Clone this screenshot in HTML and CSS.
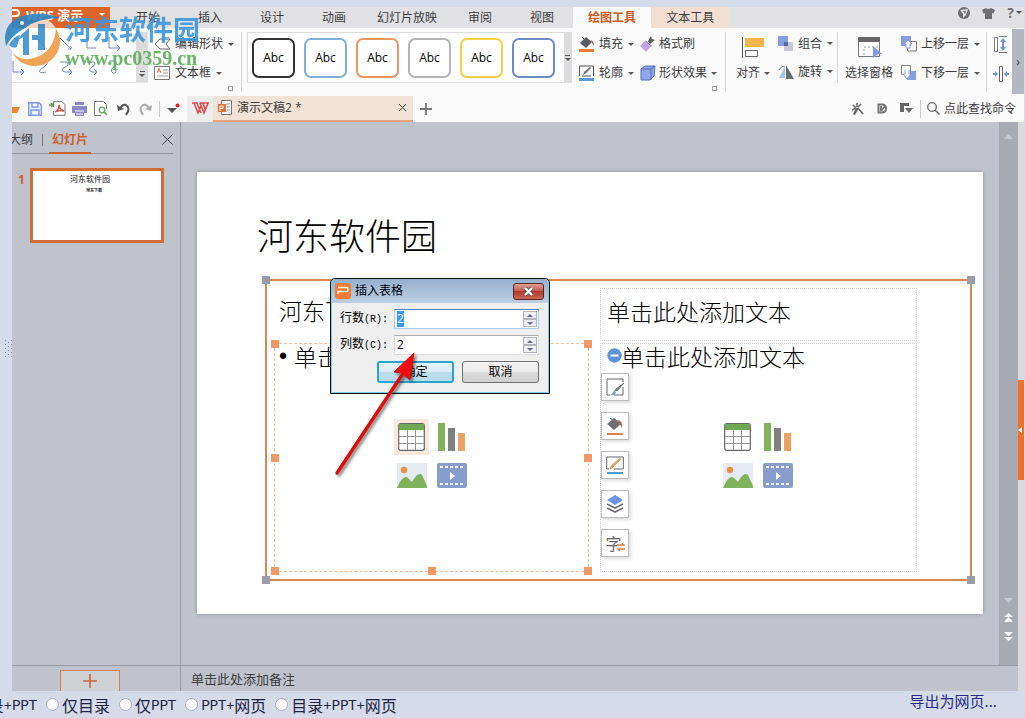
FILE: index.html
```html
<!DOCTYPE html>
<html lang="zh-CN">
<head>
<meta charset="utf-8">
<title>WPS 演示</title>
<link rel="stylesheet" href="styles.css">
</head>
<body>
<div class="workspace">
  <div class="gutter"><svg width="8" height="18" viewBox="0 0 8 18"><g fill="#7d93b8"><path d="M1 0h1v1h-1zM4 2h1v1h-1zM1 4h1v1h-1zM4 6h1v1h-1zM1 8h1v1h-1zM4 10h1v1h-1zM1 12h1v1h-1zM4 14h1v1h-1zM1 16h1v1h-1zM7 0h1v1h-1zM7 4h1v1h-1zM7 8h1v1h-1zM7 12h1v1h-1zM7 16h1v1h-1z"/></g></svg></div>
  <div class="app">
    <nav class="tabs">
      <button class="brand"><svg width="8" height="14" viewBox="0 0 8 14"><path d="M0 2h4q3 0 3 3t-3 3H0" fill="none" stroke="#fff" stroke-width="2"/></svg><b>WPS 演示</b><i class="caret light"></i></button>
      <button class="tab">开始</button>
      <button class="tab">插入</button>
      <button class="tab">设计</button>
      <button class="tab">动画</button>
      <button class="tab wide">幻灯片放映</button>
      <button class="tab">审阅</button>
      <button class="tab">视图</button>
      <button class="tab active">绘图工具</button>
      <button class="tab context">文本工具</button>
      <div class="tab-tools">
        <svg width="12" height="12" viewBox="0 0 12 12"><circle cx="6" cy="6" r="6" fill="#6f6f72"/><path d="M2 3l8-1-2 6-3 3 0-4z" fill="#e1e1e3"/><path d="M5 4l3 0-1 3z" fill="#6f6f72"/></svg>
        <svg width="13" height="12" viewBox="0 0 13 12"><path d="M4 1q2.500 2 5 0l4 2-1.500 3.500L10 6v6H3V6L1.500 6.500 0 3z" fill="#6f6f72"/></svg>
        <span class="help">?<i class="caret"></i></span>
      </div>
    </nav>

    <div class="ribbon">
      <div class="shape-gallery">
        <svg class="shapes" width="124" height="50" viewBox="0 0 124 50"><g fill="none" stroke="#6b86bf"><path d="M3 6l10 11M25 6l10 11M48 6l11 11M56 17h3v-3M75 5v11h9M97 5v11h11M105 13l3 3-3 3M1 29v11h11M9 37l3 3-3 3M28 30h6q3 1-1 4l-5 4q-2 4 6 2M48 30h7q3 3-2 5-5 3 0 5h7M57 37l3 3-3 3M75 30h7q3 2-2 5-5 3 0 5h5M82 37l3 3-3 3M97 29h6q3 3-1 6-5 3-1 6 3 1 3-3"/></g></svg>
        <button class="gallery-scroll" aria-label="更多形状"><i></i><i class="caret"></i></button>
      </div>
      <div class="stack edit">
        <button class="cmd"><svg width="17" height="14" viewBox="0 0 17 14"><path d="M1 7l5-5h10l-4 5 4 5H6z" fill="none" stroke="#666" /><path d="M11 0h4v3h-4z" fill="#8eaadb"/></svg>编辑形状<i class="caret"></i></button>
        <button class="cmd"><svg width="17" height="14" viewBox="0 0 17 14"><path d="M.5.5h15v13H.5z" fill="#fff" stroke="#777"/><path d="M3 7l2-5 2 5M4 5h2" fill="none" stroke="#d97b4f"/><path d="M9 4h5M9 7h5M3 10h11" stroke="#999"/></svg>文本框<i class="caret"></i></button>
        <i class="launcher"></i>
      </div>
      <div class="style-gallery">
        <button class="style s1">Abc</button><button class="style s2">Abc</button><button class="style s3">Abc</button><button class="style s4">Abc</button><button class="style s5">Abc</button><button class="style s6">Abc</button>
        <button class="gallery-scroll center" aria-label="更多样式"><i></i><i class="caret"></i></button>
      </div>
      <div class="stack">
        <button class="cmd"><svg width="16" height="16" viewBox="0 0 16 16"><path d="M1 7l6-6 6 5-6 6z" fill="#555b60"/><path d="M3 1l4 4" stroke="#555"/><path d="M12 4q3 1 3 6l-2-3z" fill="#b45b5b"/><path d="M0 13h15v3H0z" fill="#e97e32"/></svg>填充<i class="caret"></i></button>
        <button class="cmd"><svg width="16" height="16" viewBox="0 0 16 16"><path d="M.5 11V1h14v10M3 11h9" fill="none" stroke="#555"/><path d="M4 10l1-3 6-5 1 1-5 5z" fill="#666"/><path d="M0 13h15v3H0z" fill="#5b9bd5"/></svg>轮廓<i class="caret"></i></button>
      </div>
      <div class="stack effects">
        <button class="cmd"><svg width="16" height="16" viewBox="0 0 16 16"><path d="M8 5l3-5 1 3 3 1-5 4z" fill="#5d5d60"/><path d="M5 4l7 6-3 2z" fill="#6b6577"/><path d="M5 5l6 5-5 6-6-6z" fill="#c4a2e8"/></svg>格式刷</button>
        <button class="cmd"><svg width="16" height="16" viewBox="0 0 16 16"><path d="M1 4l4-3h10l-1 10-4 4H1z" fill="#8fa6ee" stroke="#5470b5"/><path d="M1 4h10v11M11 4l4-3" fill="none" stroke="#5470b5"/></svg>形状效果<i class="caret"></i></button>
        <i class="launcher"></i>
      </div>
      <button class="big align"><svg width="24" height="23" viewBox="0 0 24 23"><path d="M1.500 1v21" stroke="#555"/><path d="M4 2h19v9H4z" fill="#f5b54d"/><path d="M4.500 14.500h12v6h-12z" fill="#fff" stroke="#666"/></svg><span>对齐<i class="caret"></i></span></button>
      <div class="stack arrange">
        <button class="cmd"><svg width="16" height="16" viewBox="0 0 16 16"><path d="M6 6h9v9H6z" fill="#c9c9cf"/><path d="M0 0h10v10H0z" fill="#869ee4"/><path d="M6 6h4v4H6z" fill="#5967a6"/></svg>组合<i class="caret"></i></button>
        <button class="cmd"><svg width="16" height="16" viewBox="0 0 16 16"><path d="M7 2v12H1z" fill="#a9c5ec"/><path d="M8 1v14h8z" fill="#666b70"/><path d="M1 6q3-5 6-3" fill="none" stroke="#6790dd"/></svg>旋转<i class="caret"></i></button>
      </div>
      <button class="big pane"><svg width="25" height="23" viewBox="0 0 25 23"><path d="M1.500 2v18.500h21V2" fill="#fff" stroke="#777"/><path d="M1 1h22v5H1z" fill="#666"/><path d="M7 19V11h15" fill="none" stroke="#999" stroke-dasharray="2 2"/><path d="M16 10l9 8h-4l-5 4z" fill="#7d98e6"/></svg><span>选择窗格</span></button>
      <div class="stack">
        <button class="cmd"><svg width="16" height="16" viewBox="0 0 16 16"><path d="M0 0h10v10H0z" fill="#869ee4"/><path d="M10 5.500h5.500v9.500h-9v-4" fill="none" stroke="#777"/><path d="M3 8l4-4 4 4H9v4H5V8z" fill="#fff" stroke="#869ee4"/></svg>上移一层<i class="caret"></i></button>
        <button class="cmd"><svg width="16" height="16" viewBox="0 0 16 16"><path d="M6 6h9v9H6z" fill="#869ee4"/><path d="M.5.500h9v9h-9z" fill="#fff" stroke="#888"/><path d="M4 5v4H2l4 5 4-5H8V5" fill="#fff" stroke="#869ee4"/></svg>下移一层<i class="caret"></i></button>
      </div>
      <div class="stack sizes">
        <svg width="14" height="17" viewBox="0 0 14 17"><path d="M1.500 1.500h3v14h-3z" fill="#fff" stroke="#777"/><path d="M6 .500h8M6 16.500h8" stroke="#777"/><path d="M10 2l3 4h-2v5h2l-3 4-3-4h2V6H7z" fill="#6e94de"/></svg>
        <svg width="16" height="16" viewBox="0 0 16 16"><path d="M6.500.500h3v15h-3z" fill="#fff" stroke="#666"/><path d="M0 7h2V5l3 3-3 3V9H0zM16 7h-2V5l-3 3 3 3V9h2z" fill="#6e94de"/></svg>
      </div>
      <button class="more" aria-label="更多">›</button>
    </div>

    <div class="quick">
      <button class="slot first" aria-label="打开"><svg width="10" height="12" viewBox="0 0 10 12"><path d="M0 4h8l-3 6H0z" fill="#f0882c"/></svg></button>
      <button class="slot" aria-label="保存"><svg width="14" height="14" viewBox="0 0 14 14"><path d="M.7.7H11l2.300 2.300v10.300H.7zM4 1v4h6V1M3 13V8h8v5" fill="#eef2ff" stroke="#7c9ae3" stroke-width="1.400"/></svg></button>
      <button class="slot" aria-label="输出PDF"><svg width="17" height="15" viewBox="0 0 17 15"><path d="M4.500 6V.700H13l3 3v10.600H4.500V10" fill="#fff" stroke="#777"/><path d="M6 11q4-2 4-7 1 5 5 6-4-1-9 1" fill="none" stroke="#d2453e" stroke-width="1.300"/><path d="M0 4h4M2 2l2 2-2 2" fill="none" stroke="#5b9d4d" stroke-width="1.500"/></svg></button>
      <button class="slot" aria-label="打印"><svg width="15" height="14" viewBox="0 0 15 14"><path d="M3 0h9v3H3zM0 4h15v7H0zM3 10h9v4H3z" fill="#8d88c8"/><path d="M3 9h9M4 12h7" stroke="#fff"/></svg></button>
      <button class="slot" aria-label="打印预览"><svg width="14" height="15" viewBox="0 0 14 15"><path d="M12.500 8V3.500l-3-3h-9v14H7" fill="#fff" stroke="#777"/><circle cx="8" cy="9" r="2.800" fill="none" stroke="#69a457" stroke-width="1.300"/><path d="M10 11l3 3" stroke="#69a457" stroke-width="1.500"/></svg></button>
      <button class="slot" aria-label="撤消"><svg width="13" height="14" viewBox="0 0 13 14"><path d="M0 3l1 6 6-2z" fill="#555"/><path d="M3 7q2-5 6-4 5 3 0 10" fill="none" stroke="#555" stroke-width="2"/></svg></button>
      <button class="slot" aria-label="恢复"><svg width="13" height="14" viewBox="0 0 13 14"><path d="M13 3l-1 6-6-2z" fill="#aaa"/><path d="M10 7Q8 2 4 3q-5 3 0 10" fill="none" stroke="#aaa" stroke-width="2"/></svg></button>
      <span class="divider"></span>
      <button class="slot customize" aria-label="自定义"><svg width="13" height="12" viewBox="0 0 13 12"><path d="M0 5h10l-5 5z" fill="#555"/><circle cx="10.500" cy="2.500" r="2" fill="#e21d25"/></svg></button>
      <button class="home" aria-label="首页"><svg width="17" height="13" viewBox="0 0 17 13"><path d="M0 1h5l4 10M2 1l4 10 3-7M8 1h8l-4 10-4-10M11 1l2 6" fill="none" stroke="#e2474b" stroke-width="1.500"/></svg></button>
      <div class="doc-tab"><svg width="14" height="15" viewBox="0 0 14 15"><path d="M3.500 5V.500h10v14h-10V12" fill="#fff" stroke="#777"/><path d="M8 4h4M9 7h3M9 10h3" stroke="#999"/><path d="M0 4h8v8H0z" fill="#df7336"/><path d="M2 11V6h3v2.500H2" fill="none" stroke="#fff"/></svg><span>演示文稿2 *</span><button aria-label="关闭"><svg width="9" height="9" viewBox="0 0 9 9"><path d="M1 1l7 7M8 1L1 8" stroke="#444"/></svg></button></div>
      <button class="new" aria-label="新建"><svg width="12" height="12" viewBox="0 0 12 12"><path d="M6 0v12M0 6h12" stroke="#777" stroke-width="1.800"/></svg></button>
      <div class="quick-right">
        <svg width="12" height="12" viewBox="0 0 12 12"><path d="M5 0v4M1 2l3 3M9 1L6 4M0 7l4-2M6 5l5 6" fill="none" stroke="#666" stroke-width="1.500"/><path d="M4 5l3 0-4 7-2-1z" fill="#666"/></svg>
        <svg width="10" height="11" viewBox="0 0 10 11"><path d="M1.500 1.500H5q4 0 4 4t-4 4H1.500zM4 3v5M4 8l4-5" fill="none" stroke="#777" stroke-width="2"/></svg>
        <svg width="13" height="11" viewBox="0 0 13 11"><path d="M0 0h9v3H4v6H0zM5 5h8l-4 5z" fill="#666"/></svg>
        <span class="divider"></span>
        <button class="search"><svg width="13" height="13" viewBox="0 0 13 13"><circle cx="5" cy="5" r="4.300" fill="none" stroke="#666" stroke-width="1.300"/><path d="M8 8l4.500 4.500" stroke="#666" stroke-width="1.500"/></svg>点此查找命令</button>
      </div>
    </div>

    <div class="main">
      <aside class="sidebar">
        <div class="side-tabs"><button class="outline">大纲</button><span class="divider"></span><button class="selected">幻灯片</button><button class="close" aria-label="关闭"><svg width="11" height="11" viewBox="0 0 11 11"><path d="M.5.500l10 10M10.500.500l-10 10" stroke="#444"/></svg></button></div>
        <div class="thumbs"><b>1</b><div class="thumb"><span>河东软件园</span><small>河东下载</small></div></div>
        <div class="side-foot"><button aria-label="新建幻灯片"><svg width="14" height="14" viewBox="0 0 14 14"><path d="M7 0v14M0 7h14" stroke="#c8673a" stroke-width="1.600"/></svg></button></div>
      </aside>
      <section class="editor">
        <div class="canvas-row">
          <div class="canvas">
            <div class="slide">
              <h1>河东软件园</h1>
              <div class="group"><i class="grip tl"></i><i class="grip tr"></i><i class="grip bl"></i><i class="grip br"></i></div>
              <p class="left-title">河东下</p>
              <div class="body-box left"><p><span class="bullet">•</span>单击</p><div class="icons"><svg class="hot" width="35" height="36" viewBox="-4 -4 35 36"><use href="#ico-table"/></svg><svg width="28" height="28" viewBox="0 0 28 28"><use href="#ico-chart"/></svg><svg width="30" height="25" viewBox="0 0 30 25"><use href="#ico-image"/></svg><svg width="30" height="25" viewBox="0 0 30 25"><use href="#ico-film"/></svg></div>
                <i class="grip tl"></i><i class="grip tr"></i><i class="grip ml"></i><i class="grip mr"></i><i class="grip bl"></i><i class="grip bc"></i><i class="grip br"></i></div>
              <div class="title-box"><p>单击此处添加文本</p></div>
              <div class="body-box right"><p>单击此处添加文本</p><div class="icons"><svg width="35" height="36" viewBox="-4 -4 35 36"><use href="#ico-table"/></svg><svg width="28" height="28" viewBox="0 0 28 28"><use href="#ico-chart"/></svg><svg width="30" height="25" viewBox="0 0 30 25"><use href="#ico-image"/></svg><svg width="30" height="25" viewBox="0 0 30 25"><use href="#ico-film"/></svg></div></div>
              <div class="float-tools">
                <button class="minus" aria-label="收起"><svg width="15" height="15" viewBox="0 0 15 15"><circle cx="7.500" cy="7.500" r="7.200" fill="#5f93da"/><path d="M3.500 7.500h8" stroke="#fff" stroke-width="2"/></svg></button>
                <button aria-label="样式"><svg width="18" height="18" viewBox="0 0 18 18"><path d="M17 9v8H8M4 17H1V1h16v3" fill="none" stroke="#666"/><path d="M18 5l-7 8-2-1z" fill="#6d7468" stroke="#6d7468"/><path d="M8 12l2 2q-1 4-6 3 3-1 4-5z" fill="#7c95d2"/></svg></button>
                <button aria-label="填充"><svg width="18" height="18" viewBox="0 0 18 18"><path d="M1 7l7-6 7 6-7 6z" fill="#707072"/><path d="M4 1l4 3" stroke="#666"/><path d="M11 3q6 0 5 8l-2-4z" fill="#bb5a60"/><path d="M1 16h16v2H1z" fill="#db854c"/></svg></button>
                <button aria-label="轮廓"><svg width="18" height="18" viewBox="0 0 18 18"><path d="M3 13H.700V1h16.600v12H8" fill="none" stroke="#666"/><path d="M15 3l-9 9-2 1 1-3 8-7z" fill="#e3a067" stroke="#e3a067"/><path d="M1 16h16v2H1z" fill="#4f99d5"/></svg></button>
                <button aria-label="层次"><svg width="18" height="18" viewBox="0 0 18 18"><path d="M9 0l8 5-8 5-8-5z" fill="#6c95e2"/><path d="M1 9l8 4 8-4M1 13l8 4 8-4" fill="none" stroke="#707070" stroke-width="1.600"/></svg></button>
                <button class="glyph" aria-label="转换">字<svg width="8" height="8" viewBox="0 0 8 8"><path d="M0 2h7L5 0M8 6H1l2 2" fill="none" stroke="#df7b42" stroke-width="1.300"/></svg></button>
              </div>
            </div>
          </div>
          <div class="scrollbar"><svg width="9" height="5" viewBox="0 0 9 5"><path d="M0 5l4.500-5L9 5z" fill="#c7c8cc"/></svg><span></span><svg width="9" height="5" viewBox="0 0 9 5"><path d="M0 0h9L4.500 5z" fill="#c7c8cc"/></svg><svg width="9" height="9" viewBox="0 0 9 9"><path d="M0 4l4.500-4L9 4zM0 9l4.500-5L9 9z" fill="#fff"/></svg><svg width="9" height="9" viewBox="0 0 9 9"><path d="M0 0h9L4.500 4zM0 5h9L4.500 9z" fill="#fff"/></svg></div>
        </div>
        <div class="notes">单击此处添加备注</div>
      </section>
      <div class="right-rail"><button aria-label="展开"><svg width="4" height="6" viewBox="0 0 4 6"><path d="M4 0v6L0 3z" fill="#fff"/></svg></button></div>
    </div>
  </div>

  <form class="dialog">
    <header><svg width="16" height="16" viewBox="0 0 16 16"><rect width="16" height="16" rx="3" fill="#f47a35"/><path d="M3 11V8.500h8.500q1.500 0 1.500-2T11.500 4.500H3" fill="none" stroke="#fff" stroke-width="1.400"/></svg><span>插入表格</span><button type="button" aria-label="关闭"><svg width="11" height="9" viewBox="0 0 11 9"><path d="M2 1l7 7M9 1L2 8" stroke="#555" stroke-width="4"/><path d="M2 1l7 7M9 1L2 8" stroke="#fff" stroke-width="2.400"/></svg></button></header>
    <div class="field focus"><label for="rows">行数<span>(R):</span></label><div class="spin"><input id="rows" value="2"><div><button type="button" aria-label="增加行"><i class="caret up"></i></button><button type="button" aria-label="减少行"><i class="caret"></i></button></div></div></div>
    <div class="field"><label for="cols">列数<span>(C):</span></label><div class="spin"><input id="cols" value="2"><div><button type="button" aria-label="增加列"><i class="caret up"></i></button><button type="button" aria-label="减少列"><i class="caret"></i></button></div></div></div>
    <footer><button type="button" class="ok">确定</button><button type="button">取消</button></footer>
  </form>
  <svg class="pointer" width="90" height="130" viewBox="0 0 90 130"><defs><filter id="shade" x="-20%" y="-20%" width="140%" height="140%"><feDropShadow dx="2" dy="2" stdDeviation="1.500" flood-opacity=".5"/></filter></defs><g filter="url(#shade)"><path d="M6 123L71 25" stroke="#dc1010" stroke-width="3.500" stroke-linecap="round"/><path d="M83 3L63 22l8 1 8 7z" fill="#f01010" stroke="#d01010"/></g></svg>

  <div class="watermark">
    <svg width="58" height="54" viewBox="0 0 58 54"><ellipse cx="30" cy="28" rx="25" ry="24" fill="#fff" fill-opacity=".8"/><path d="M2 34Q-3 12 18 4q20-6 38 2-22 0-35 10Q7 24 2 34z" fill="#2d86c4"/><path d="M8 40q8 10 22 6Q50 40 52 17q7 11 2 22-8 16-26 15Q14 52 8 40z" fill="#ef9b45"/><path d="M18 22l7-6v27h-6V25l-6 4zM34 12h7v26h-7V28h-6v-5h6z" fill="#3c91ce"/><path d="M5 33q5-9 11-10l-3 12q-4 2-8-2z" fill="#3c91ce"/><circle cx="18" cy="11" r="2" fill="#fff"/></svg>
    <div><strong>河东软件园</strong><em>www.pc0359.cn</em></div>
  </div>
</div>

<form class="bottom">
  <label class="cut">录<span>+PPT</span></label>
  <label><input type="radio" name="export">仅目录</label>
  <label><input type="radio" name="export">仅<span>PPT</span></label>
  <label><input type="radio" name="export"><span>PPT+</span>网页</label>
  <label><input type="radio" name="export">目录<span>+PPT+</span>网页</label>
  <a href="#">导出为网页...</a>
</form>

<svg class="symbols" width="0" height="0">
  <symbol id="ico-table" viewBox="0 0 27 28" width="27" height="28"><rect x=".7" y=".7" width="25.600" height="26.600" rx="2" fill="#fff" stroke="#666" stroke-width="1.200"/><path d="M1 1h25v6H1z" fill="#6fa954"/><path d="M1 13.500h25M1 20.500h25M9.500 7v20M17.500 7v20" stroke="#999"/></symbol>
  <symbol id="ico-chart" viewBox="0 0 28 28" width="28" height="28"><path d="M0 0h7v28H0z" fill="#82b25b"/><path d="M10 5h7v23h-7z" fill="#808080"/><path d="M20 10h7v18h-7z" fill="#eba363"/></symbol>
  <symbol id="ico-image" viewBox="0 0 30 25" width="30" height="25"><rect width="30" height="25" rx="1" fill="#e6eaf2"/><circle cx="7" cy="7" r="3.200" fill="#e99045"/><path d="M0 25q6-14 11-10l4 4q6-11 10-7l5 11v2z" fill="#7fb35a"/></symbol>
  <symbol id="ico-film" viewBox="0 0 30 25" width="30" height="25"><rect width="30" height="25" rx="2" fill="#879dcc"/><path d="M3 4h25M3 21h25" stroke="#fff" stroke-width="2" stroke-dasharray="3 2"/><path d="M13 9l5 4-5 4z" fill="#fff"/></symbol>
</svg>
<script src="app.js"></script>
</body>
</html>
```
FILE: styles.css
```css
* { box-sizing: border-box; }
body {
  margin: 0;
  height: 100vh;
  display: flex;
  flex-direction: column;
  overflow: hidden;
  background: #d6dbea;
  color: #3c3c3e;
  font: 12px/16px "Open Sans", "Noto Sans CJK SC", sans-serif;
}
button {
  margin: 0;
  padding: 0;
  border: 0;
  background: none;
  color: inherit;
  font: inherit;
  white-space: nowrap;
}
svg { flex: none; display: block; }
.symbols { position: absolute; }
.workspace { position: relative; flex: 1; min-height: 0; display: flex; padding: 7px 1px 0 0; }
.gutter { width: 12px; display: flex; align-items: center; padding-left: 4px; }
.app { flex: 1; min-width: 0; display: flex; flex-direction: column; }
.caret { display: inline-block; border: 3px solid transparent; border-top-color: #555; border-bottom: 0; }
.caret.light { border-top-color: #fff; }
.caret.up { border-bottom: 3px solid #66668c; border-top: 0; }
.divider { width: 1px; height: 16px; background: #c9c9cc; }

.tabs { display: flex; height: 21px; background: #e1e1e3; line-height: 18px; }
.brand { display: flex; align-items: center; gap: 6px; width: 98px; margin-right: 7px; padding-bottom: 6px; background: #dc6529; color: #fff; font-size: 13px; }
.brand .caret { margin-left: 10px; }
.tab { padding: 0 19px; }
.tab.wide { padding: 0 12px; }
.tab.active, .tab.context { padding: 0 15px; }
.tab.active { background: #fafafa; color: #c95a20; font-weight: bold; }
.tab.context { background: #f3ded2; }
.tab-tools { margin-left: auto; display: flex; align-items: center; gap: 12px; padding: 0 2px 18px 0; }
.tab-tools svg { margin-top: 8px; }
.help { display: flex; align-items: center; gap: 2px; margin-top: 8px; font-size: 14px; font-weight: bold; color: #6f6f72; }

.ribbon { display: flex; align-items: flex-start; height: 67px; padding-top: 4px; background: #fafafa; }
.shape-gallery { display: flex; height: 51px; background: #fff; border-bottom: 1px solid #e5e5e5; }
.gallery-scroll { width: 12px; display: flex; flex-direction: column; align-items: center; justify-content: flex-end; gap: 2px; padding-bottom: 5px; background: #dcdcde; }
.gallery-scroll.center { justify-content: center; padding: 0; margin-left: auto; }
.gallery-scroll i:first-child { width: 5px; height: 1px; background: #555; }
.stack { position: relative; display: flex; flex-direction: column; gap: 5px; }
.cmd { display: flex; align-items: center; gap: 4px; height: 24px; }
.cmd .caret { margin-left: 1px; }
.edit { width: 94px; padding-left: 6px; height: 60px; border-right: 1px solid #d6d6d8; }
.launcher { position: absolute; right: 8px; bottom: 1px; width: 5px; height: 5px; border: 1px solid #999; }
.style-gallery { display: flex; gap: 9px; width: 325px; height: 51px; margin: 0 7px 0 5px; border: 1px solid #dcdcde; background: #fff; padding-left: 4px; }
.style { width: 43px; height: 40px; margin-top: 5px; border: 2px solid; border-radius: 7px; flex: none; }
.s1, .s2, .s3, .s4, .s5, .s6 { background: #fff; color: #000; }
.s1 { border-color: #333; }
.s2 { border-color: #7fb0dc; }
.s3 { border-color: #ec9562; }
.s4 { border-color: #b5b5b5; }
.s5 { border-color: #f4cf45; }
.s6 { border-color: #6d8bc4; }
.effects { width: 86px; height: 60px; margin-left: 6px; border-right: 1px solid #d6d6d8; }
.effects .cmd { gap: 3px; }
.big { display: flex; flex-direction: column; align-items: center; gap: 6px; padding-top: 4px; }
.big .caret { margin-left: 4px; vertical-align: middle; }
.align { margin-left: 10px; }
.arrange { width: 60px; height: 51px; margin-left: 8px; border-right: 1px solid #d6d6d8; }
.pane { margin: 0 8px 0 7px; }
.sizes { gap: 13px; height: 60px; margin-left: 6px; padding: 4px 0 0 6px; border-left: 1px solid #d6d6d8; }
.more { width: 12px; height: 65px; margin: -3px 0 0 auto; background: #b5b8c0; }

.quick { display: flex; align-items: center; height: 27px; background: #fafafa; }
.slot { width: 22px; height: 27px; display: flex; align-items: center; justify-content: center; }
.slot.first { width: 12px; justify-content: flex-start; }
.quick > .divider { margin-left: 3px; }
.customize { width: 27px; }
.home { width: 26px; height: 26px; display: flex; align-items: center; justify-content: center; background: #ededed; }
.doc-tab { display: flex; align-items: center; gap: 5px; flex: 0 1 200px; height: 26px; padding: 0 6px 0 5px; background: #f0e2d4; border-bottom: 2px solid #e6a27a; }
.doc-tab button { margin-left: auto; }
.new { padding: 0 7px; }
.quick-right { margin-left: auto; display: flex; align-items: center; gap: 13px; padding-right: 8px; }
.quick-right .divider { margin: 0 -7px 0 -6px; height: 18px; }
.search { display: flex; align-items: center; gap: 4px; }

.main { flex: 1; min-height: 0; display: flex; background: #c0c3cc; }
.sidebar { width: 169px; display: flex; flex-direction: column; border-right: 1px solid #989aa3; }
.side-tabs { display: flex; align-items: center; height: 32px; margin-right: 7px; padding-top: 4px; border-bottom: 1px solid #92949d; }
.outline { width: 21px; display: flex; justify-content: flex-end; overflow: hidden; }
.side-tabs .divider { height: 12px; margin: 0 6px 0 9px; background: #777; }
.selected { height: 28px; padding: 2px 3px 0; color: #c9622c; font-weight: bold; border-bottom: 2px solid #c9622c; }
.close { margin-left: auto; }
.thumbs { flex: 1; display: flex; align-items: flex-start; gap: 5px; padding: 14px 16px 0 6px; }
.thumbs b { width: 7px; margin-top: 4px; color: #c9622c; text-align: center; }
.thumb { flex: 1; aspect-ratio: 16 / 9; display: flex; flex-direction: column; align-items: center; padding: 2px 14px 0 0; border: 3px solid #cf6d33; background: #fff; color: #111; font-size: 8px; line-height: 12px; }
.thumb small { padding-left: 8px; font-size: 4px; line-height: 12px; font-weight: bold; }
.side-foot { height: 26px; display: flex; justify-content: center; padding: 4px 12px 0 0; border-top: 1px solid #989aa3; }
.side-foot button { width: 60px; display: flex; justify-content: center; align-items: center; background: #ced0d4; border: 1px solid #c98260; border-bottom: 0; }

.editor { flex: 1; min-width: 0; display: flex; flex-direction: column; }
.canvas-row { flex: 1; min-height: 0; display: flex; }
.canvas { flex: 1; padding: 50px 16px 0; }
.slide { position: relative; width: 100%; aspect-ratio: 16 / 9; background: #fff; box-shadow: 0 0 4px #8d9099; color: #000; font-family: "Noto Sans CJK SC", sans-serif; font-weight: 300; }
.slide h1 { position: absolute; left: 60px; top: 38px; margin: 0; font-size: 36px; line-height: 48px; font-weight: 300; }
.slide p { margin: 0; font-size: 23px; line-height: 24px; white-space: nowrap; }
.group { position: absolute; left: 68px; top: 107px; width: 707px; height: 302px; border: 2px solid #db8751; }
.grip { position: absolute; width: 8px; height: 8px; background: #ee9966; }
.group .grip { background: #9a9da8; margin: -1px; }
.tl { left: -4px; top: -4px; }
.tr { right: -4px; top: -4px; }
.ml { left: -4px; top: 110px; }
.mr { right: -4px; top: 110px; }
.bl { left: -4px; bottom: -4px; }
.bc { left: 153px; bottom: -4px; }
.br { right: -4px; bottom: -4px; }
.left-title { position: absolute; left: 82px; top: 126px; }
.title-box, .body-box { position: absolute; border: 1px dotted #ccc; }
.title-box { left: 403px; top: 116px; width: 317px; height: 53px; padding: 10px 6px; }
.body-box { top: 171px; height: 229px; }
.body-box.left { left: 77px; width: 315px; border: 1px dashed #ecbd9d; }
.body-box.left p { display: flex; padding-left: 4px; }
.bullet { width: 15px; font-family: "Liberation Sans", sans-serif; }
.body-box.right { left: 403px; width: 317px; }
.body-box.right p { padding-left: 20px; }
.icons { display: grid; grid-template-columns: 35px 30px; gap: 8px; width: 73px; margin: 51px 0 0 119px; align-items: center; justify-items: center; }
.hot { background: #fae8de; }
.float-tools { position: absolute; left: 404px; top: 177px; display: flex; flex-direction: column; gap: 11px; }
.float-tools button { width: 28px; height: 28px; display: flex; align-items: center; justify-content: center; border: 1px solid #bcbcbc; background: #fff; box-shadow: 2px 2px 3px #ddd; }
.float-tools .minus { height: 13px; width: 15px; margin-left: 6px; border: 0; background: none; box-shadow: none; }
.float-tools .glyph { font-size: 16px; font-weight: 400; color: #666; }
.glyph svg { margin: 8px 0 0 -5px; background: #fff; }
.scrollbar { width: 19px; display: flex; flex-direction: column; align-items: center; gap: 10px; padding: 12px 0 24px; background: #a9abb3; }
.scrollbar span { flex: 1; }
.notes { height: 26px; padding: 5px 10px; border-top: 1px solid #989aa3; font-size: 13px; }
.right-rail { width: 6px; display: flex; align-items: center; padding-top: 47px; background: #dadade; }
.right-rail button { width: 6px; height: 100px; display: flex; align-items: center; background: #ed7128; }

.dialog { position: absolute; left: 330px; top: 278px; width: 220px; padding: 0 10px 10px 9px; display: flex; flex-direction: column; gap: 6px; border: 1px solid #111; border-radius: 5px 5px 0 0; background: #efefef; box-shadow: inset 0 0 0 1px #77cfe4; color: #000; }
.dialog header { display: flex; align-items: center; gap: 4px; height: 24px; margin: 0 -9px 0 -8px; padding: 0 4px 0 3px; border-radius: 4px 4px 0 0; background: linear-gradient(#94b0d0, #bdcfe3); }
.dialog header button { display: flex; align-items: center; justify-content: center; width: 31px; height: 17px; margin-left: auto; border: 1px solid #5b2520; border-radius: 3px; background: linear-gradient(#dfa097, #c35749 50%, #b23a2b 50%, #cc6655); }
.field { display: flex; align-items: center; }
.field label { flex: none; width: 54px; white-space: nowrap; }
.field label span { font: 10px/16px "Liberation Mono", monospace; }
.spin { flex: 1; min-width: 0; display: flex; height: 20px; border: 1px solid #dcdfe4; border-top-color: #abadb3; background: #fff; }
.focus .spin { border-color: #a9c9e8; border-top-color: #4e83bb; }
.spin input { flex: 1; min-width: 0; padding: 0 2px; border: 0; outline: 0; background: none; font: inherit; color: #000; }
.spin input::selection { background: #3399ff; color: #fff; }
.spin div { width: 14px; margin: 1px; display: flex; flex-direction: column; }
.spin button { flex: 1; display: flex; align-items: center; justify-content: center; border: 1px solid #b4b4c0; background: #eef0f5; }
.spin .caret { border-top-color: #66668c; }
.dialog footer { display: flex; justify-content: flex-end; gap: 8px; }
.dialog footer button { width: 77px; height: 22px; border: 1px solid #707070; border-radius: 3px; background: linear-gradient(#f3f3f3, #ebebeb 50%, #dcdcdc 50%, #cfcfcf); }
.dialog footer .ok { border: 2px solid #2ca3cc; background: linear-gradient(#eaf6fc, #d8ecf6 50%, #bcdff0 50%, #b8dbec); }
.pointer { position: absolute; left: 331px; top: 350px; }

.watermark { position: absolute; left: 4px; top: 12px; display: flex; gap: 3px; pointer-events: none; opacity: 0.9; }
.watermark strong { display: block; color: #3c96df; font: bold 27px/34px "Noto Sans CJK SC", sans-serif; }
.watermark em { display: block; color: #5cae57; font: normal bold 20px/24px "Liberation Serif", serif; }

.bottom { display: flex; align-items: center; height: 27px; gap: 9px; color: #1c2444; font: 16px/24px "Noto Sans CJK SC", sans-serif; white-space: nowrap; }
.bottom label { display: flex; align-items: center; }
.bottom label span { font: 14px/24px Lato, sans-serif; }
.bottom .cut { width: 37px; justify-content: flex-end; overflow: hidden; }
.bottom input { appearance: none; width: 13px; height: 13px; margin: 0 3px 0 0; border: 1px solid #a9adb8; border-radius: 50%; background: #fff; }
.bottom a { margin: -7px 28px 0 auto; color: #272c8c; font-size: 15px; text-decoration: none; }
```
FILE: app.js
```js
const rows = document.getElementById('rows');
rows.focus();
rows.select();
```
